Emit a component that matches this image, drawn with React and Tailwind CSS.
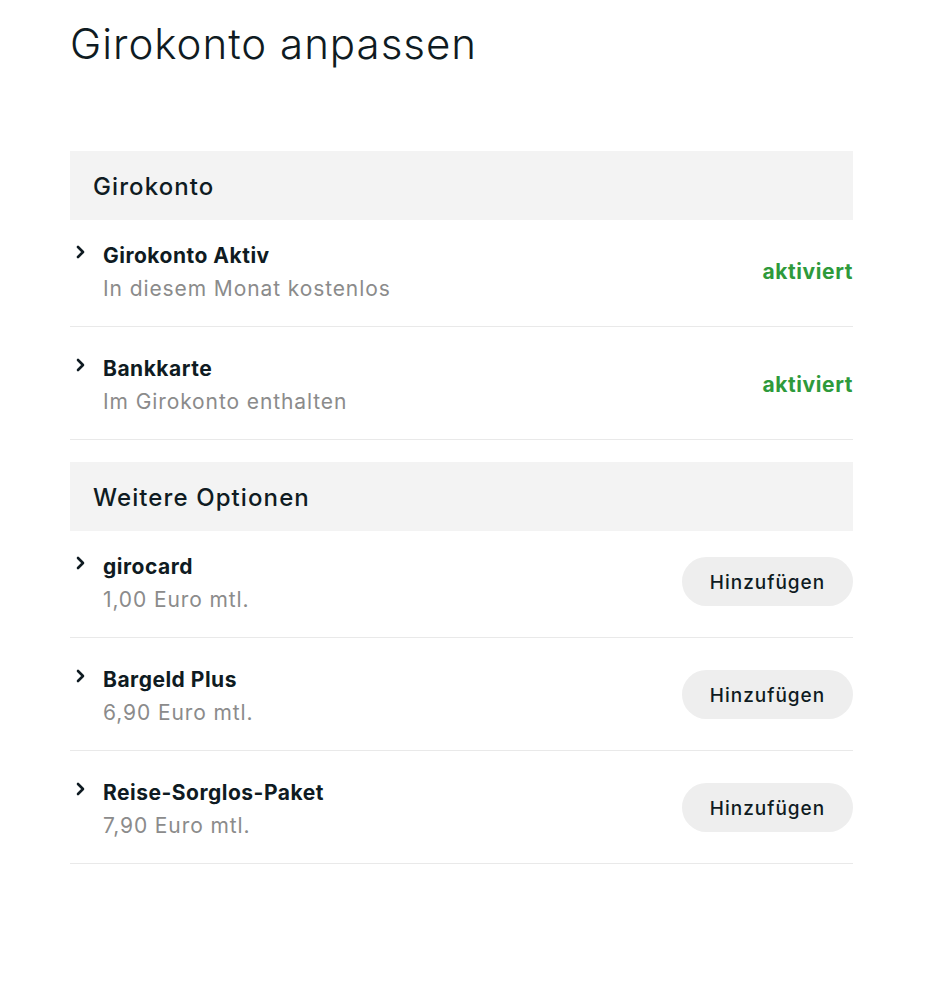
import React from "react";

const girokonto = [
  { title: "Girokonto Aktiv", sub: "In diesem Monat kostenlos" },
  { title: "Bankkarte", sub: "Im Girokonto enthalten" },
];

const optionen = [
  { title: "girocard", sub: "1,00 Euro mtl." },
  { title: "Bargeld Plus", sub: "6,90 Euro mtl." },
  { title: "Reise-Sorglos-Paket", sub: "7,90 Euro mtl." },
];

function Chevron() {
  return (
    <svg width="10" height="14" viewBox="0 0 10 14" className="mt-[6px] ml-[6px]">
      <path d="M2 2l5 5-5 5" fill="none" stroke="#0f1b22" strokeWidth="2.6" strokeLinecap="round" strokeLinejoin="round" />
    </svg>
  );
}

function Row({ title, sub, first, children }) {
  return (
    <div className={`flex items-center justify-between border-b border-[#e9e9e9] pb-[21px] ${first ? "pt-[19px]" : "pt-[25px]"}`}>
      <div className="flex">
        <div className="w-[33px] shrink-0">
          <Chevron />
        </div>
        <div>
          <div className="text-[21px] leading-[33px] font-bold text-[#0f1b22] tracking-[0.5px]">{title}</div>
          <div className="text-[21px] leading-[33px] text-[#8b8b8b] tracking-[0.9px]">{sub}</div>
        </div>
      </div>
      {children}
    </div>
  );
}

function SectionHeader({ children }) {
  return (
    <div className="bg-[#f3f3f3] h-[69px] flex items-center px-[23px] pt-[2px] text-[24px] font-medium text-[#0f1b22] tracking-[1.1px]">
      {children}
    </div>
  );
}

export default function App() {
  return (
    <div className="min-h-screen bg-white font-['Inter',sans-serif]">
      <div className="w-[783px] ml-[70px] pt-[17px] pb-10">
        <h1 className="text-[42px] leading-[54px] font-light text-[#0f1b22] tracking-[1px]">Girokonto anpassen</h1>

        <div className="mt-[80px]">
          <SectionHeader>Girokonto</SectionHeader>
          {girokonto.map((r, i) => (
            <Row key={r.title} title={r.title} sub={r.sub} first={i === 0}>
              <span className="text-[21px] font-bold text-[#2e9a3b] tracking-[0.6px]">aktiviert</span>
            </Row>
          ))}
        </div>

        <div className="mt-[22px]">
          <SectionHeader>Weitere Optionen</SectionHeader>
          {optionen.map((r, i) => (
            <Row key={r.title} title={r.title} sub={r.sub} first={i === 0}>
              <button className="w-[171px] h-[49px] pt-[5px] rounded-full bg-[#eeeeee] text-[19px] font-medium text-[#0f1b22] tracking-[1px] -mt-[4px]">
                Hinzufügen
              </button>
            </Row>
          ))}
        </div>
      </div>
    </div>
  );
}
